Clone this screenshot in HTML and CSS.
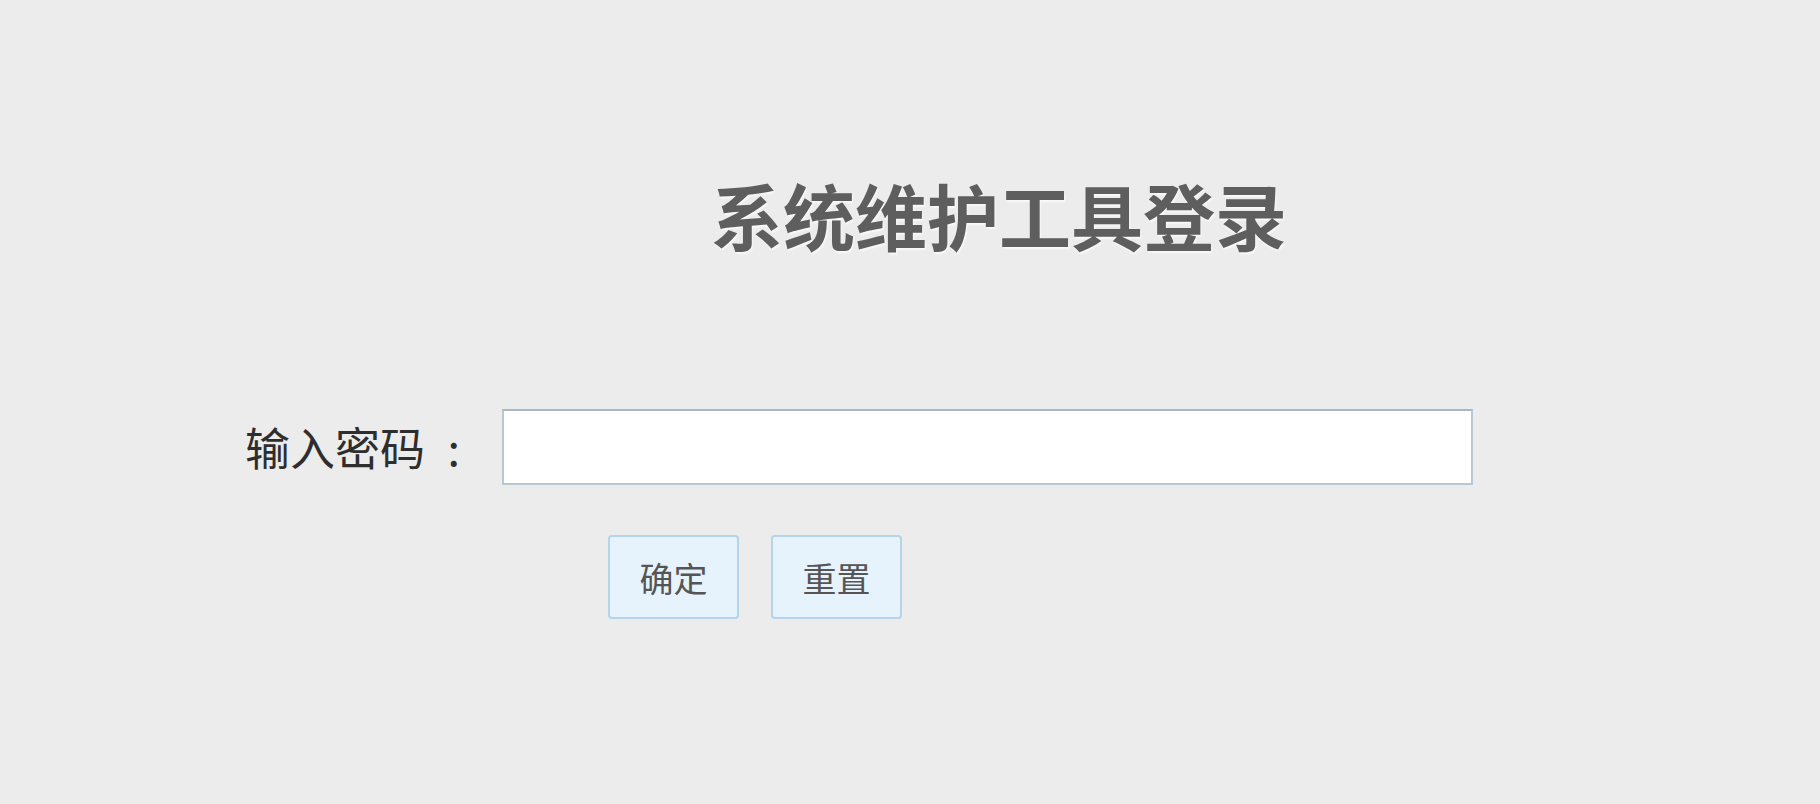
FILE: index.html
```html
<!DOCTYPE html>
<html lang="zh-CN">
<head>
    <meta charset="UTF-8">
    <meta name="viewport" content="width=device-width, initial-scale=1.0">
    <title>系统维护工具登录</title>
    <link rel="stylesheet" href="styles.css">
</head>
<body>
    <div class="login">
        <h1 class="login-title">系统维护工具登录</h1>

        <form class="login-form" onsubmit="return false;">
            <div class="form-row">
                <label for="password" class="form-label">输入密码<span class="colon">:</span></label>
                <input type="password" id="password" class="form-input">
            </div>
            <div class="form-buttons">
                <button type="submit" class="btn">确定</button>
                <button type="reset" class="btn">重置</button>
            </div>
        </form>
    </div>
</body>
</html>
```

FILE: styles.css
```css
html, body {
    margin: 0;
    padding: 0;
    background: #ececec;
}
body {
    font-family: "Noto Sans CJK SC", "Noto Sans", sans-serif;
    height: 804px;
    overflow: hidden;
}
.login {
    padding-top: 178px;
}
.login-title {
    margin: 0 0 0 711px;
    font-size: 72px;
    line-height: 72px;
    font-weight: bold;
    color: #5e5e5e;
    text-shadow: 1px 2px 2px rgba(255, 255, 255, 0.7);
}
.login-form {
    margin: 0;
}
.form-row {
    display: flex;
    align-items: center;
    gap: 32px;
    margin: 159px 0 0 245px;
}
.form-label {
    font-size: 45px;
    line-height: 76px;
    color: #2e2e2e;
    white-space: nowrap;
}
.colon {
    display: inline-block;
    width: 1em;
    text-align: right;
    padding-right: 0.22em;
    box-sizing: border-box;
}
.form-input {
    box-sizing: border-box;
    width: 971px;
    height: 76px;
    margin: 0;
    border: 2px solid #b8c8d2;
    border-top-color: #a9b9c4;
    background: #fff;
    outline: none;
    font-size: 32px;
    padding: 0 12px;
}
.form-buttons {
    display: flex;
    gap: 32px;
    margin: 50px 0 0 608px;
}
.btn {
    box-sizing: border-box;
    width: 131px;
    height: 84px;
    padding: 0;
    border: 2px solid #b4d4ea;
    border-radius: 4px;
    background: #e6f3fd;
    font-family: "Noto Sans CJK SC", "Noto Sans", sans-serif;
    font-size: 34px;
    color: #555;
    cursor: pointer;
}
```
